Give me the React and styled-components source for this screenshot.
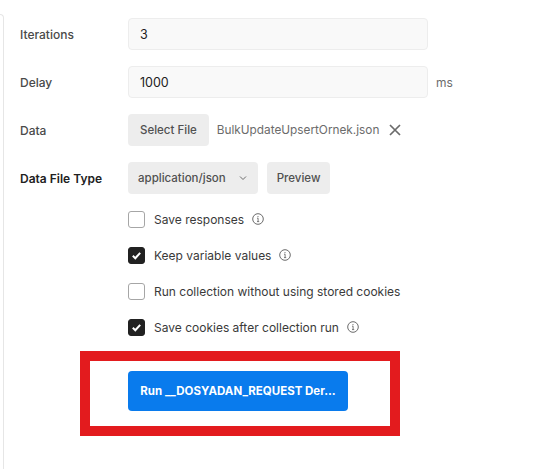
import React from 'react';
import styled, { createGlobalStyle } from 'styled-components';

const GlobalStyle = createGlobalStyle`
  html, body {
    margin: 0;
    padding: 0;
    background: #ffffff;
  }
  body {
    font-family: Inter, 'Noto Sans', 'Liberation Sans', sans-serif;
    -webkit-font-smoothing: antialiased;
  }
`;

const Page = styled.div`
  position: relative;
  width: 559px;
  height: 469px;
  overflow: hidden;
  display: flex;
`;

const SidePanel = styled.div`
  width: 3px;
  margin-top: 14px;
  height: 460px;
  border-top: 1px solid #e6e6e6;
  border-right: 1px solid #e6e6e6;
  border-top-right-radius: 6px;
  flex-shrink: 0;
`;

const Form = styled.div`
  padding: 18px 0 0 16px;
  display: flex;
  flex-direction: column;
`;

const Row = styled.div`
  display: flex;
  align-items: center;
  height: 32px;
  margin-bottom: 16px;
`;

const Label = styled.div`
  width: 108px;
  font-size: 12px;
  font-weight: ${p => (p.strong ? 600 : 500)};
  color: ${p => (p.strong ? '#212121' : '#4a4a4a')};
`;

const Input = styled.div`
  box-sizing: border-box;
  width: 300px;
  height: 32px;
  padding: 0 11px;
  display: flex;
  align-items: center;
  background: #f9f9f9;
  border: 1px solid #ededed;
  border-radius: 4px;
  font-size: 12.5px;
  color: #212121;
`;

const Unit = styled.span`
  margin-left: 8px;
  font-size: 12px;
  color: #6b6b6b;
`;

const Button = styled.div`
  box-sizing: border-box;
  height: 32px;
  padding: 0 ${p => p.px || 12}px;
  display: flex;
  align-items: center;
  gap: 12px;
  background: #ededed;
  border-radius: 4px;
  font-size: 11.5px;
  font-weight: 500;
  color: #505050;
  margin-right: ${p => p.mr || 0}px;
`;

const FileName = styled.span`
  margin-left: 8px;
  font-size: 11.8px;
  color: #6b6b6b;
`;

const CloseIcon = styled.svg`
  margin-left: 10px;
  width: 12px;
  height: 12px;
`;

const Checks = styled.div`
  margin-left: 108px;
  display: flex;
  flex-direction: column;
  gap: 18px;
`;

const CheckRow = styled.label`
  display: flex;
  align-items: center;
  height: 18px;
  font-size: 12px;
  color: #3a3a3a;
`;

const Box = styled.span`
  box-sizing: border-box;
  width: 17px;
  height: 17px;
  border-radius: 3px;
  border: 1px solid ${p => (p.checked ? '#212121' : '#a6a6a6')};
  background: ${p => (p.checked ? '#212121' : '#ffffff')};
  display: flex;
  align-items: center;
  justify-content: center;
  margin-right: 9px;
`;

const Info = styled.svg`
  margin-left: 8px;
  width: 12px;
  height: 12px;
`;

const RunWrap = styled.div`
  margin-left: 108px;
  margin-top: 35px;
`;

const RunButton = styled.div`
  box-sizing: border-box;
  width: 220px;
  height: 40px;
  background: #097bed;
  border-radius: 4px;
  color: #ffffff;
  font-size: 11.5px;
  font-weight: 700;
  line-height: 40px;
  text-align: center;
  white-space: nowrap;
`;

const Highlight = styled.div`
  position: absolute;
  left: 80px;
  top: 351px;
  width: 320px;
  height: 85px;
  box-sizing: border-box;
  border: 10px solid #e31b1e;
  pointer-events: none;
`;

const Chevron = () => (
  <svg width="10" height="10" viewBox="0 0 10 10">
    <path d="M2 3.5 L5 6.5 L8 3.5" fill="none" stroke="#6b6b6b" strokeWidth="1" />
  </svg>
);

const InfoIcon = () => (
  <Info viewBox="0 0 12 12">
    <circle cx="6" cy="6" r="5.3" fill="none" stroke="#6b6b6b" strokeWidth="1" />
    <path d="M5 5.2 H6.1 V8.6 M5 8.6 H7.2" fill="none" stroke="#6b6b6b" strokeWidth="0.9" />
    <circle cx="6" cy="3.6" r="0.6" fill="#6b6b6b" />
  </Info>
);

const Check = ({ checked, children, info }) => (
  <CheckRow>
    <Box checked={checked}>
      {checked && (
        <svg width="11" height="11" viewBox="0 0 11 11">
          <path d="M1.8 5.8 L4.3 8.2 L9.2 2.8" fill="none" stroke="#ffffff" strokeWidth="2" />
        </svg>
      )}
    </Box>
    {children}
    {info && <InfoIcon />}
  </CheckRow>
);

export default function App() {
  return (
    <Page>
      <GlobalStyle />
      <SidePanel />
      <Form>
        <Row>
          <Label>Iterations</Label>
          <Input>3</Input>
        </Row>
        <Row>
          <Label>Delay</Label>
          <Input>1000</Input>
          <Unit>ms</Unit>
        </Row>
        <Row>
          <Label>Data</Label>
          <Button>Select File</Button>
          <FileName>BulkUpdateUpsertOrnek.json</FileName>
          <CloseIcon viewBox="0 0 12 12">
            <path d="M1 1 L11 11 M11 1 L1 11" stroke="#6b6b6b" strokeWidth="1.7" />
          </CloseIcon>
        </Row>
        <Row>
          <Label strong>Data File Type</Label>
          <Button px={10} mr={9}>
            application/json
            <Chevron />
          </Button>
          <Button px={10}>Preview</Button>
        </Row>
        <Checks>
          <Check info>Save responses</Check>
          <Check checked info>Keep variable values</Check>
          <Check>Run collection without using stored cookies</Check>
          <Check checked info>Save cookies after collection run</Check>
        </Checks>
        <RunWrap>
          <RunButton>Run __DOSYADAN_REQUEST Der...</RunButton>
        </RunWrap>
      </Form>
      <Highlight />
    </Page>
  );
}
